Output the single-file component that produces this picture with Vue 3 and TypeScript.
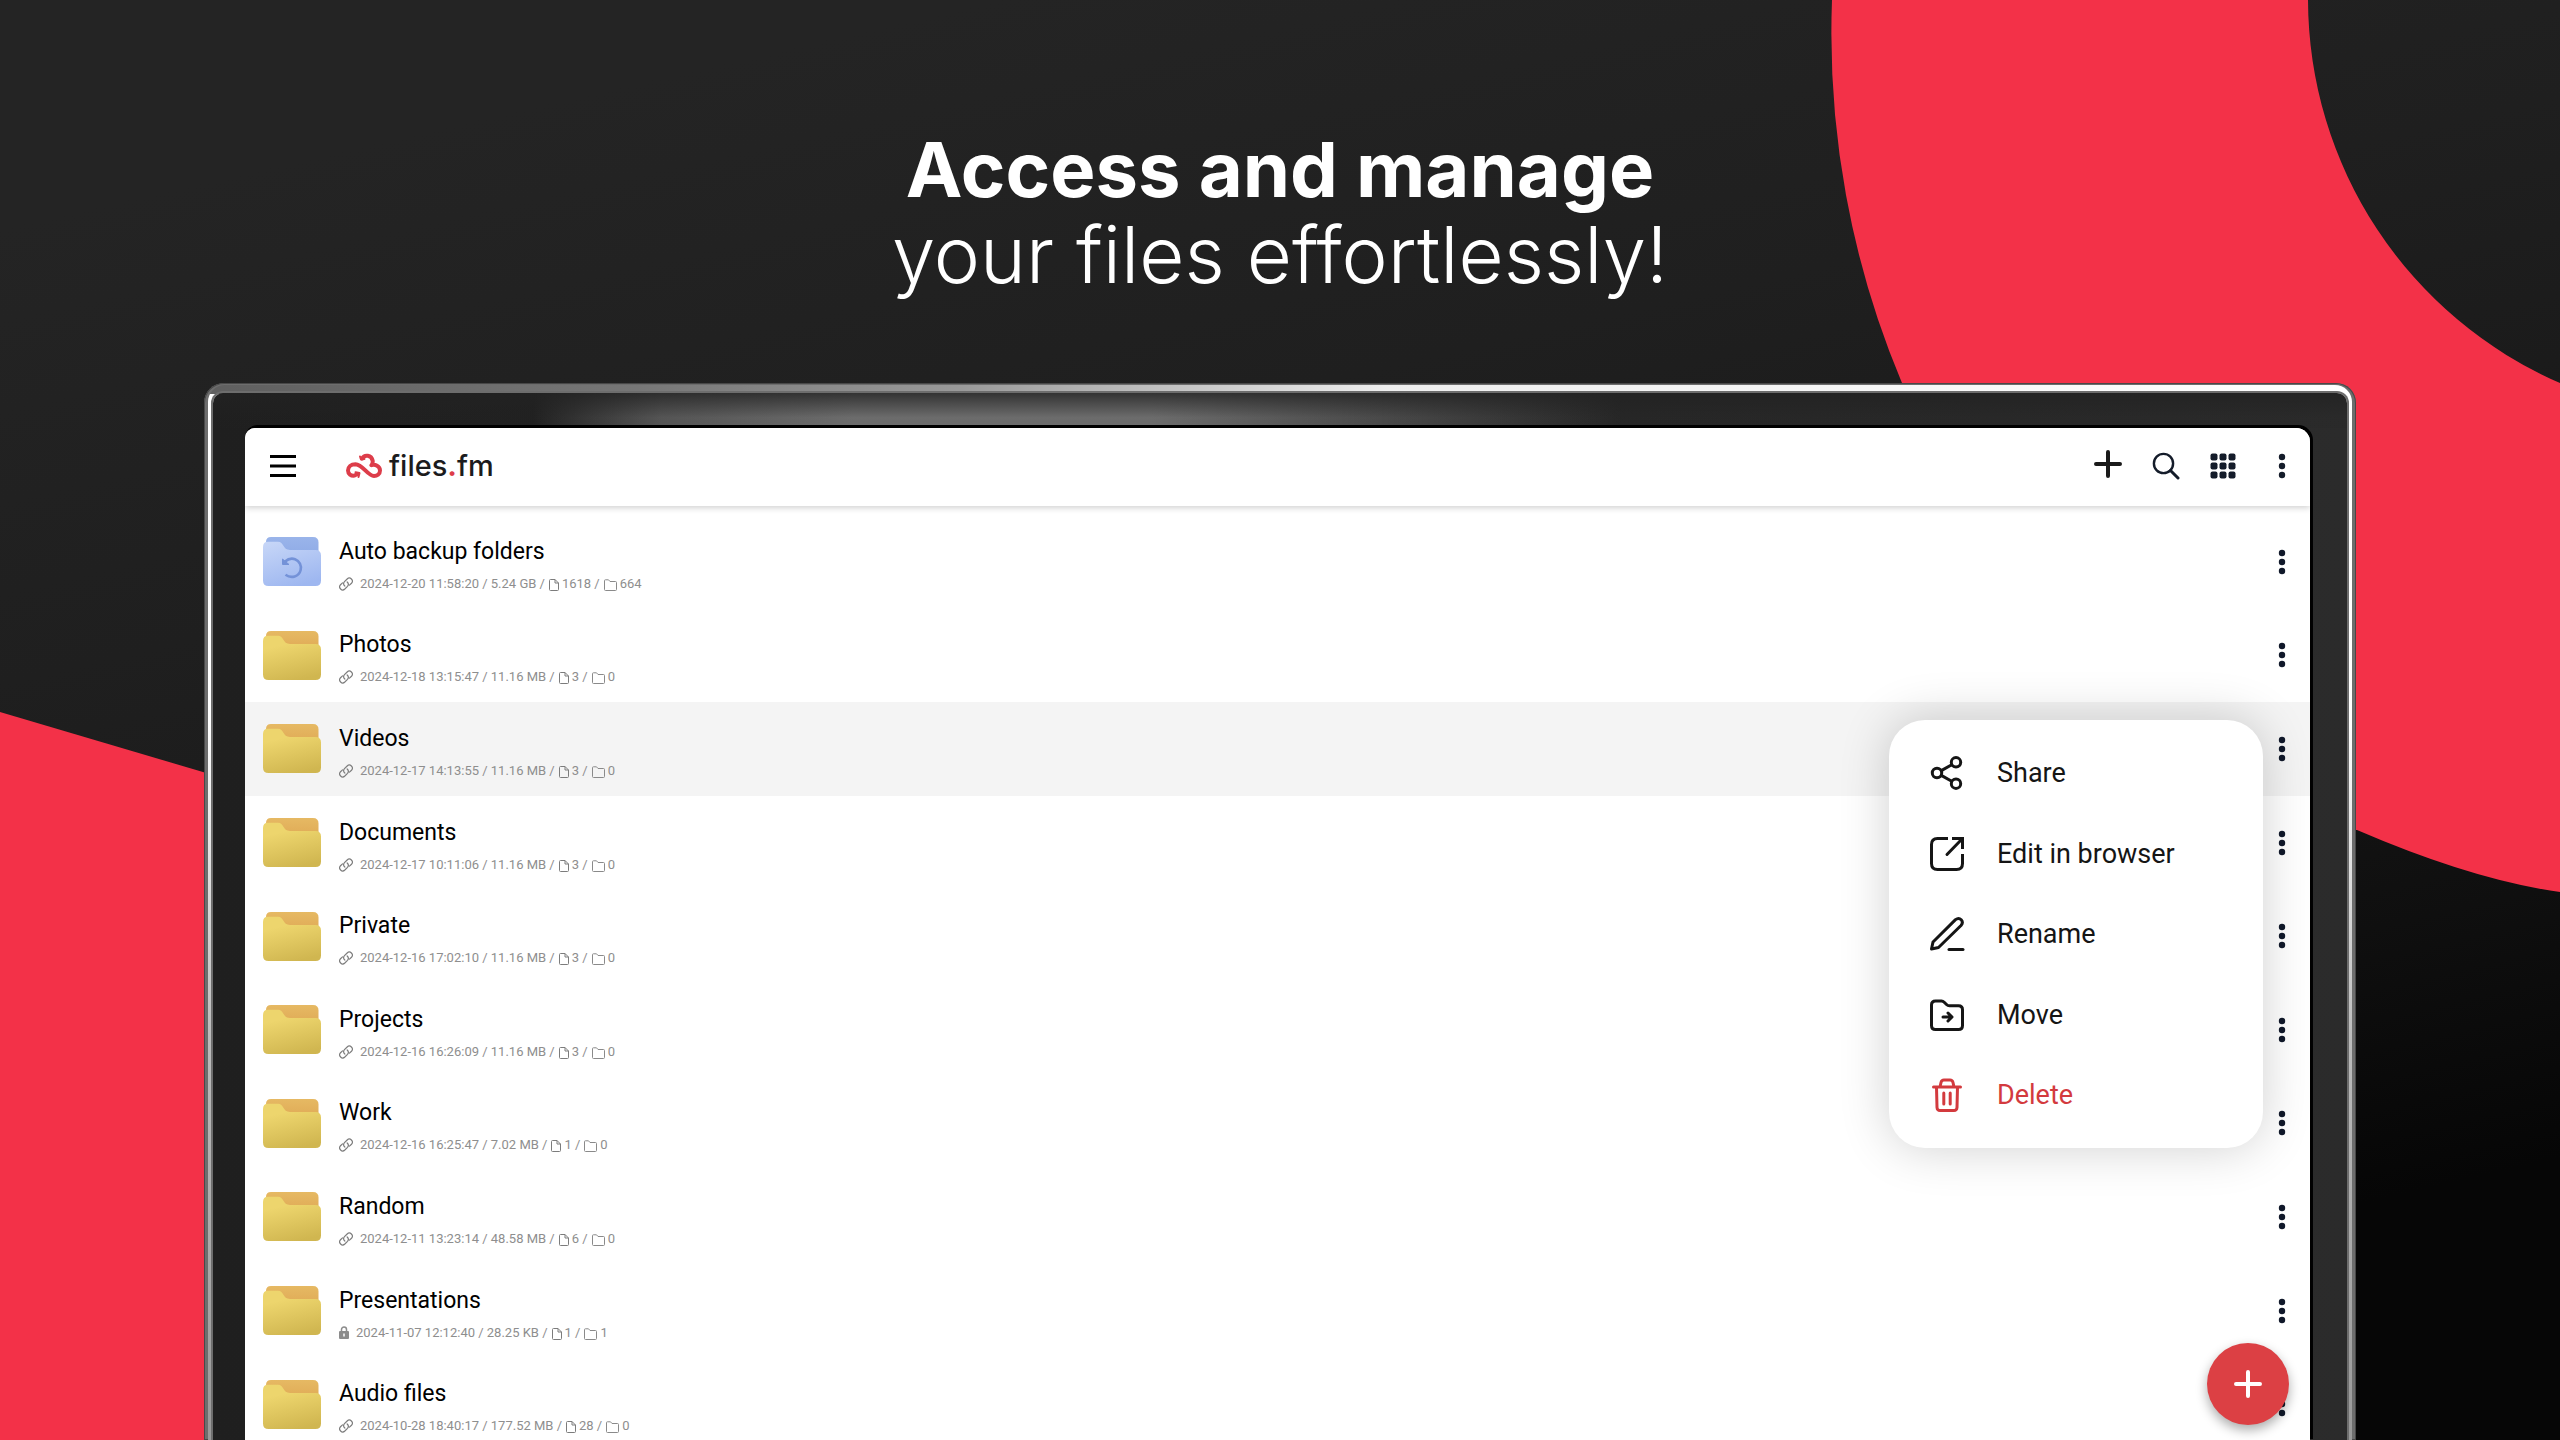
<script setup lang="ts">
import { ref } from 'vue'

interface Entry {
  name: string
  date: string
  size: string
  files: number
  folders: number
  access: 'link' | 'lock'
  backup?: boolean
}

const entries: Entry[] = [
  { name: 'Auto backup folders', date: '2024-12-20 11:58:20', size: '5.24 GB', files: 1618, folders: 664, access: 'link', backup: true },
  { name: 'Photos', date: '2024-12-18 13:15:47', size: '11.16 MB', files: 3, folders: 0, access: 'link' },
  { name: 'Videos', date: '2024-12-17 14:13:55', size: '11.16 MB', files: 3, folders: 0, access: 'link' },
  { name: 'Documents', date: '2024-12-17 10:11:06', size: '11.16 MB', files: 3, folders: 0, access: 'link' },
  { name: 'Private', date: '2024-12-16 17:02:10', size: '11.16 MB', files: 3, folders: 0, access: 'link' },
  { name: 'Projects', date: '2024-12-16 16:26:09', size: '11.16 MB', files: 3, folders: 0, access: 'link' },
  { name: 'Work', date: '2024-12-16 16:25:47', size: '7.02 MB', files: 1, folders: 0, access: 'link' },
  { name: 'Random', date: '2024-12-11 13:23:14', size: '48.58 MB', files: 6, folders: 0, access: 'link' },
  { name: 'Presentations', date: '2024-11-07 12:12:40', size: '28.25 KB', files: 1, folders: 1, access: 'lock' },
  { name: 'Audio files', date: '2024-10-28 18:40:17', size: '177.52 MB', files: 28, folders: 0, access: 'link' },
]

const openMenu = ref<string | null>('Videos')

const actions = [
  { id: 'share', label: 'Share' },
  { id: 'edit', label: 'Edit in browser' },
  { id: 'rename', label: 'Rename' },
  { id: 'move', label: 'Move' },
  { id: 'delete', label: 'Delete' },
]

function toggle(name: string) {
  openMenu.value = openMenu.value === name ? null : name
}
</script>

<template>
  <main class="stage">
    <svg class="backdrop" viewBox="0 0 2560 1440" preserveAspectRatio="xMidYMid slice" aria-hidden="true">
      <defs>
        <linearGradient id="night" gradientUnits="userSpaceOnUse" x1="1000" y1="0" x2="1330" y2="1440">
          <stop offset="0" stop-color="#242424" />
          <stop offset="0.3" stop-color="#1f1f1f" />
          <stop offset="0.6" stop-color="#181818" />
          <stop offset="0.82" stop-color="#0f0f0f" />
          <stop offset="1" stop-color="#060606" />
        </linearGradient>
        <linearGradient id="folder-front" x1="0.3" y1="0" x2="0.6" y2="1">
          <stop offset="0.2" stop-color="#edd56d" />
          <stop offset="1" stop-color="#d0b650" />
        </linearGradient>
        <linearGradient id="folder-back" x1="0" y1="0" x2="0" y2="1">
          <stop offset="0" stop-color="#e6b963" />
          <stop offset="1" stop-color="#dfa955" />
        </linearGradient>
        <linearGradient id="backup-front" x1="0.2" y1="0" x2="0.6" y2="1">
          <stop offset="0" stop-color="#c5d5f7" />
          <stop offset="1" stop-color="#9eb7f0" />
        </linearGradient>
        <linearGradient id="backup-back" x1="0" y1="0" x2="0" y2="1">
          <stop offset="0" stop-color="#9ab4ea" />
          <stop offset="1" stop-color="#8eabe6" />
        </linearGradient>
      </defs>
      <rect width="2560" height="1440" fill="url(#night)" />
      <path fill="#f33148" d="M1832 0A900 900 0 0 0 1902 383L2200 830H2357Q2473 880 2560 892V383A419 419 0 0 1 2308 0Z" />
      <path fill="#f33148" d="M0 712L230 780V1440H0Z" />
    </svg>

    <h1 class="headline">
      <strong>Access and manage</strong>
      <span>your files effortlessly!</span>
    </h1>

    <div class="frame">
      <div class="shine">
        <div class="bezel">
          <div class="screen">
            <header class="toolbar">
              <button class="icon-button menu-button" type="button" aria-label="Open navigation">
                <svg width="26" height="24" viewBox="0 0 26 24" stroke="#000" stroke-width="3">
                  <path d="M0 2.5H26M0 12H26M0 21.5H26" />
                </svg>
              </button>
              <a class="brand" href="#">
                <svg width="36" height="26" viewBox="0 0 36 26" fill="none" stroke="#dd3d4a" stroke-width="4" stroke-linecap="round" stroke-linejoin="round">
                  <path d="M16 5.5C18.5 1 25.5 2 26.6 7.5C27 9.5 26.4 11 25.4 12.2C29 10.8 34 13 34 17.6C34 21.5 31 23 28 23C21.500 23 17 11.500 9.500 11.200C5 11.200 2 14 2 17.600C2 21 5 23 8.500 22.600L11.500 21" />
                  <path d="M14 3.500L15 6.500L18.500 6" stroke-width="2" fill="#dd3d4a" />
                  <path d="M9.500 19.200L13.500 20L12.500 24" stroke-width="2" fill="#dd3d4a" />
                </svg>
                <span class="brand-name">files<b>.</b>fm</span>
              </a>
              <div class="tools">
                <button class="icon-button" type="button" aria-label="Add">
                  <svg class="add-icon" width="28" height="32" viewBox="0 0 28 32" stroke="#1a1a1a" stroke-width="4" stroke-linecap="round">
                    <path d="M14 2V26M2 14H26" />
                  </svg>
                </button>
                <button class="icon-button" type="button" aria-label="Search">
                  <svg width="28" height="28" viewBox="0 0 28 28" fill="none" stroke="#141c2a" stroke-width="2.400" stroke-linecap="round">
                    <circle cx="11.500" cy="11.500" r="9.600" />
                    <path d="M18.500 18.500L26 26" stroke-width="3" />
                  </svg>
                </button>
                <button class="icon-button" type="button" aria-label="Grid view">
                  <svg width="26" height="26" viewBox="0 0 26 26" fill="#141c2a">
                    <template v-for="r in 3" :key="r">
                      <rect v-for="c in 3" :key="c" :x="(c - 1) * 9 + 0.5" :y="(r - 1) * 9 + 0.5" width="7" height="7" rx="2" />
                    </template>
                  </svg>
                </button>
                <button class="icon-button" type="button" aria-label="More options">
                  <svg width="8" height="26" viewBox="0 0 8 26" fill="#141c2a">
                    <circle v-for="d in 3" :key="d" cx="4" :cy="d * 9 - 5" r="3.200" />
                  </svg>
                </button>
              </div>
            </header>

            <ul class="list">
              <li v-for="e in entries" :key="e.name" class="row" :class="{ active: openMenu === e.name }">
                <svg class="folder" width="58" height="49" viewBox="0 0 58 49" aria-hidden="true">
                  <path :fill="e.backup ? 'url(#backup-back)' : 'url(#folder-back)'" d="M8 0H50Q55.500 0 55.500 5.500V20H3V5Q3 0 8 0Z" />
                  <path :fill="e.backup ? 'url(#backup-front)' : 'url(#folder-front)'" d="M5 4.800H15C21 4.800 19.500 13 27 13H52.500Q58 13 58 18.500V43.500Q58 49 52.500 49H5.500Q0 49 0 43.500V10Q0 4.800 5 4.800Z" />
                  <g v-if="e.backup" fill="none" stroke="#7492d8" stroke-width="2.600">
                    <path d="M22 24.500C25.500 21.500 29 21 32 22.200C36.500 24 38.800 28.500 37.600 33.200C36 39.500 28.500 42 22.500 37.800" />
                    <path fill="#7492d8" stroke-width="1" d="M19.500 22V27.500H26Z" />
                  </g>
                </svg>
                <div class="info">
                  <a class="name" href="#">{{ e.name }}</a>
                  <div class="meta">
                    <svg v-if="e.access === 'link'" width="14" height="14" viewBox="0 0 24 24" fill="none" stroke="#7c7c7c" stroke-width="2" stroke-linecap="round">
                      <path d="M10 15.500A5.400 5.400 0 0 1 9.400 8L14 3.400A5.200 5.200 0 0 1 21.400 10.700L18 14" />
                      <path d="M14 8.500A5.400 5.400 0 0 1 14.600 16L10 20.600A5.200 5.200 0 0 1 2.600 13.300L6 10" />
                    </svg>
                    <svg v-else width="10" height="13" viewBox="0 0 10 13">
                      <path d="M2.500 6V3.500A2.500 2.500 0 0 1 7.500 3.500V6" fill="none" stroke="#8c8c8c" stroke-width="1.500" />
                      <rect y="5" width="10" height="8" rx="1" fill="#8c8c8c" />
                      <path d="M5 7.500V10.500" stroke="#fff" stroke-width="1.500" />
                    </svg>
                    <span class="date">{{ e.date }} / {{ e.size }} /</span>
                    <svg class="file-icon" width="10" height="12" viewBox="0 0 10 12" fill="none" stroke="#7c7c7c">
                      <path d="M6 .5H1.500Q.5 .5 .5 1.500V10.500Q.5 11.500 1.500 11.500H8.500Q9.500 11.500 9.500 10.500V4ZM6 .5V4H9.500" />
                    </svg>
                    <span class="count">{{ e.files }} /</span>
                    <svg class="file-icon" width="13" height="12" viewBox="0 0 13 12" fill="none" stroke="#8a8a8a">
                      <path d="M.5 1.500Q.5 .8 1.500 .8H4.500L6 2.500H11.500Q12.500 2.500 12.500 3.500V10.500Q12.500 11.500 11.500 11.500H1.500Q.5 11.500 .5 10.500Z" />
                    </svg>
                    <span class="count">{{ e.folders }}</span>
                  </div>
                </div>
                <button class="icon-button" type="button" :aria-label="`Options for ${e.name}`" @click="toggle(e.name)">
                  <svg width="8" height="26" viewBox="0 0 8 26" fill="#10182a">
                    <circle v-for="d in 3" :key="d" cx="4" :cy="d * 9 - 5" r="3.200" />
                  </svg>
                </button>

                <div v-if="openMenu === e.name" class="menu" role="menu">
                  <button v-for="a in actions" :key="a.id" class="menu-item" :class="a.id" type="button" role="menuitem">
                    <svg width="36" height="36" viewBox="0 0 36 36" fill="none" stroke="currentColor" stroke-width="3" stroke-linecap="round" stroke-linejoin="round">
                      <template v-if="a.id === 'share'">
                        <circle cx="8" cy="18" r="4.700" />
                        <circle cx="27" cy="7.300" r="4.700" />
                        <circle cx="27" cy="28.700" r="4.700" />
                        <path d="M12.300 15.600L22.700 9.700M12.300 20.400L22.700 26.300" />
                      </template>
                      <template v-else-if="a.id === 'edit'">
                        <path stroke-linecap="butt" d="M19 2.500H8.500Q2.500 2.500 2.500 8.500V27.500Q2.500 33.500 8.500 33.500H27.500Q33.500 33.500 33.500 27.500V18" />
                        <path stroke-linecap="butt" stroke-linejoin="miter" d="M23 2.500H33.500V13" />
                        <path d="M32.500 3.500L18 18.500" />
                      </template>
                      <template v-else-if="a.id === 'rename'">
                        <path d="M2.500 33L4 26L26.500 3.600Q29.800 1.200 32.200 3.800Q34.600 6.400 32 9.500L9.500 31.500Z" />
                        <path d="M20 33.500H34" />
                      </template>
                      <template v-else-if="a.id === 'move'">
                        <path d="M2.500 8Q2.500 4 6.500 4H12.500Q14 4 15.200 5.200L17.500 7.500Q18.800 8.800 20.500 8.800H29.500Q33.500 8.800 33.500 12.800V28.500Q33.500 32.500 29.500 32.500H6.500Q2.500 32.500 2.500 28.500Z" />
                        <path d="M14 20H22.500M19 16L23 20L19 24" />
                      </template>
                      <template v-else>
                        <path d="M4.500 10H31.500M7.500 10L8 30.500Q8.200 33.500 11 33.500H25Q27.800 33.500 28 30.500L28.500 10M11 10L12 5.500Q12.600 3 15 3H21Q23.400 3 24 5.500L25 10" />
                        <path d="M14.800 16V27M21.200 16V27" />
                      </template>
                    </svg>
                    <span>{{ a.label }}</span>
                  </button>
                </div>
              </li>
            </ul>

            <button class="fab" type="button" aria-label="Upload">
              <svg width="30" height="30" viewBox="0 0 30 30" stroke="#fff" stroke-width="4" stroke-linecap="round">
                <path d="M15 3V27M3 15H27" />
              </svg>
            </button>
          </div>
        </div>
      </div>
    </div>
  </main>
</template>

<style>
body {
  background: #1b1b1b;
}
</style>

<style scoped>
.stage {
  position: relative;
  isolation: isolate;
  display: flex;
  flex-direction: column;
  box-sizing: border-box;
  height: 100vh;
  min-height: 720px;
  padding: 0 204px;
  overflow: hidden;
  font-family: "Roboto", sans-serif;
}

.backdrop {
  position: absolute;
  inset: 0;
  z-index: -1;
  width: 100%;
  height: 100%;
}

.headline {
  display: flex;
  flex-direction: column;
  align-items: center;
  margin: 0;
  padding: 126px 0 85px;
  color: #fff;
  font: 300 78px/86px "Inter", sans-serif;
}

.headline strong {
  font-size: 76px;
  font-weight: 700;
}

.frame,
.shine,
.bezel,
.screen {
  display: flex;
  flex: 1;
  flex-direction: column;
  min-height: 0;
}

.frame {
  padding: 2px 4px 0;
  border-radius: 20px 20px 0 0;
  background: #6d6d6d;
  box-shadow: inset 0 0 0 1px #484848;
}

.shine {
  padding: 8px 5px 0;
  border-radius: 17px 17px 0 0;
  background:
    linear-gradient(to right, #5f5f5f, #777 20%, #999 35%, #eee 55%, #fff) top / 100% 9px no-repeat,
    linear-gradient(to bottom, #fff 32%, #bbb 62%, #999);
}

.bezel {
  padding: 35px 37px 0 32px;
  border-radius: 10px 10px 0 0;
  background:
    linear-gradient(to bottom, #222c, #2222 70%) top / 100% 35px no-repeat,
    linear-gradient(to right, #0000 15%, #5c5c5c 21%, #777 30%, #777 44%, #0000 66%) top / 100% 35px no-repeat,
    linear-gradient(to right, #1f1f1f, #2b2b2b);
  box-shadow: 0 0 0 2px #6d6d6d;
}

.screen {
  position: relative;
  overflow: hidden;
  border-radius: 10px 14px 0 0;
  background: #fff;
  box-shadow: 2px -2px 0 1px #000;
}

.toolbar {
  position: relative;
  display: flex;
  flex: none;
  align-items: center;
  box-sizing: border-box;
  height: 78px;
  padding: 0 24px 2px 25px;
  background: #fff;
  box-shadow: 0 2px 6px #0000002e;
}

.icon-button {
  display: flex;
  padding: 0;
  border: 0;
  background: none;
}

.brand {
  display: flex;
  align-items: center;
  gap: 7px;
  margin-left: 50px;
  color: #1b1b1d;
  text-decoration: none;
}

.brand-name {
  font: 500 29px/32px "Inter", sans-serif;
}

.brand-name b {
  color: #dd3d4a;
}

.tools {
  display: flex;
  align-items: center;
  margin-left: auto;
}

.tools .icon-button + .icon-button {
  margin-left: 30px;
}

.tools .icon-button:last-child {
  margin-left: 42px;
}

.list {
  display: grid;
  flex: none;
  grid-auto-rows: 1fr;
  min-height: 936px;
  margin: 0;
  padding: 9px 0 0;
  list-style: none;
}

.row {
  position: relative;
  display: flex;
  align-items: center;
  padding: 0 24px 0 18px;
}

.row.active {
  background: #f4f4f4;
}

.info {
  flex: 1;
  margin-left: 18px;
  padding-top: 8px;
}

.name {
  display: block;
  width: max-content;
  color: #000;
  font-size: 23px;
  line-height: 32px;
  text-decoration: none;
}

.meta {
  display: flex;
  align-items: center;
  margin-top: 4px;
  color: #8e8e8e;
  font-size: 13px;
  line-height: 24px;
}

.date {
  margin-left: 7px;
}

.file-icon {
  margin: 2px 3px 0 4px;
}

.menu {
  position: absolute;
  top: 18px;
  right: 47px;
  z-index: 1;
  display: flex;
  flex-direction: column;
  box-sizing: border-box;
  width: 374px;
  min-height: 428px;
  padding: 13px 0;
  border-radius: 36px;
  background: #fff;
  box-shadow: 0 0 50px #00000030;
}

.menu-item {
  display: flex;
  flex: 1;
  align-items: center;
  gap: 32px;
  padding: 0 40px;
  border: 0;
  background: none;
  color: #151515;
  font: 27px/32px "Roboto", sans-serif;
}

.menu-item.delete {
  color: #d33a3e;
}

.fab {
  position: absolute;
  right: 21px;
  bottom: 15px;
  display: flex;
  align-items: center;
  justify-content: center;
  width: 82px;
  height: 82px;
  padding: 0;
  border: 0;
  border-radius: 50%;
  background: #dc4044;
  box-shadow: 0 5px 12px #00000055;
}
</style>
